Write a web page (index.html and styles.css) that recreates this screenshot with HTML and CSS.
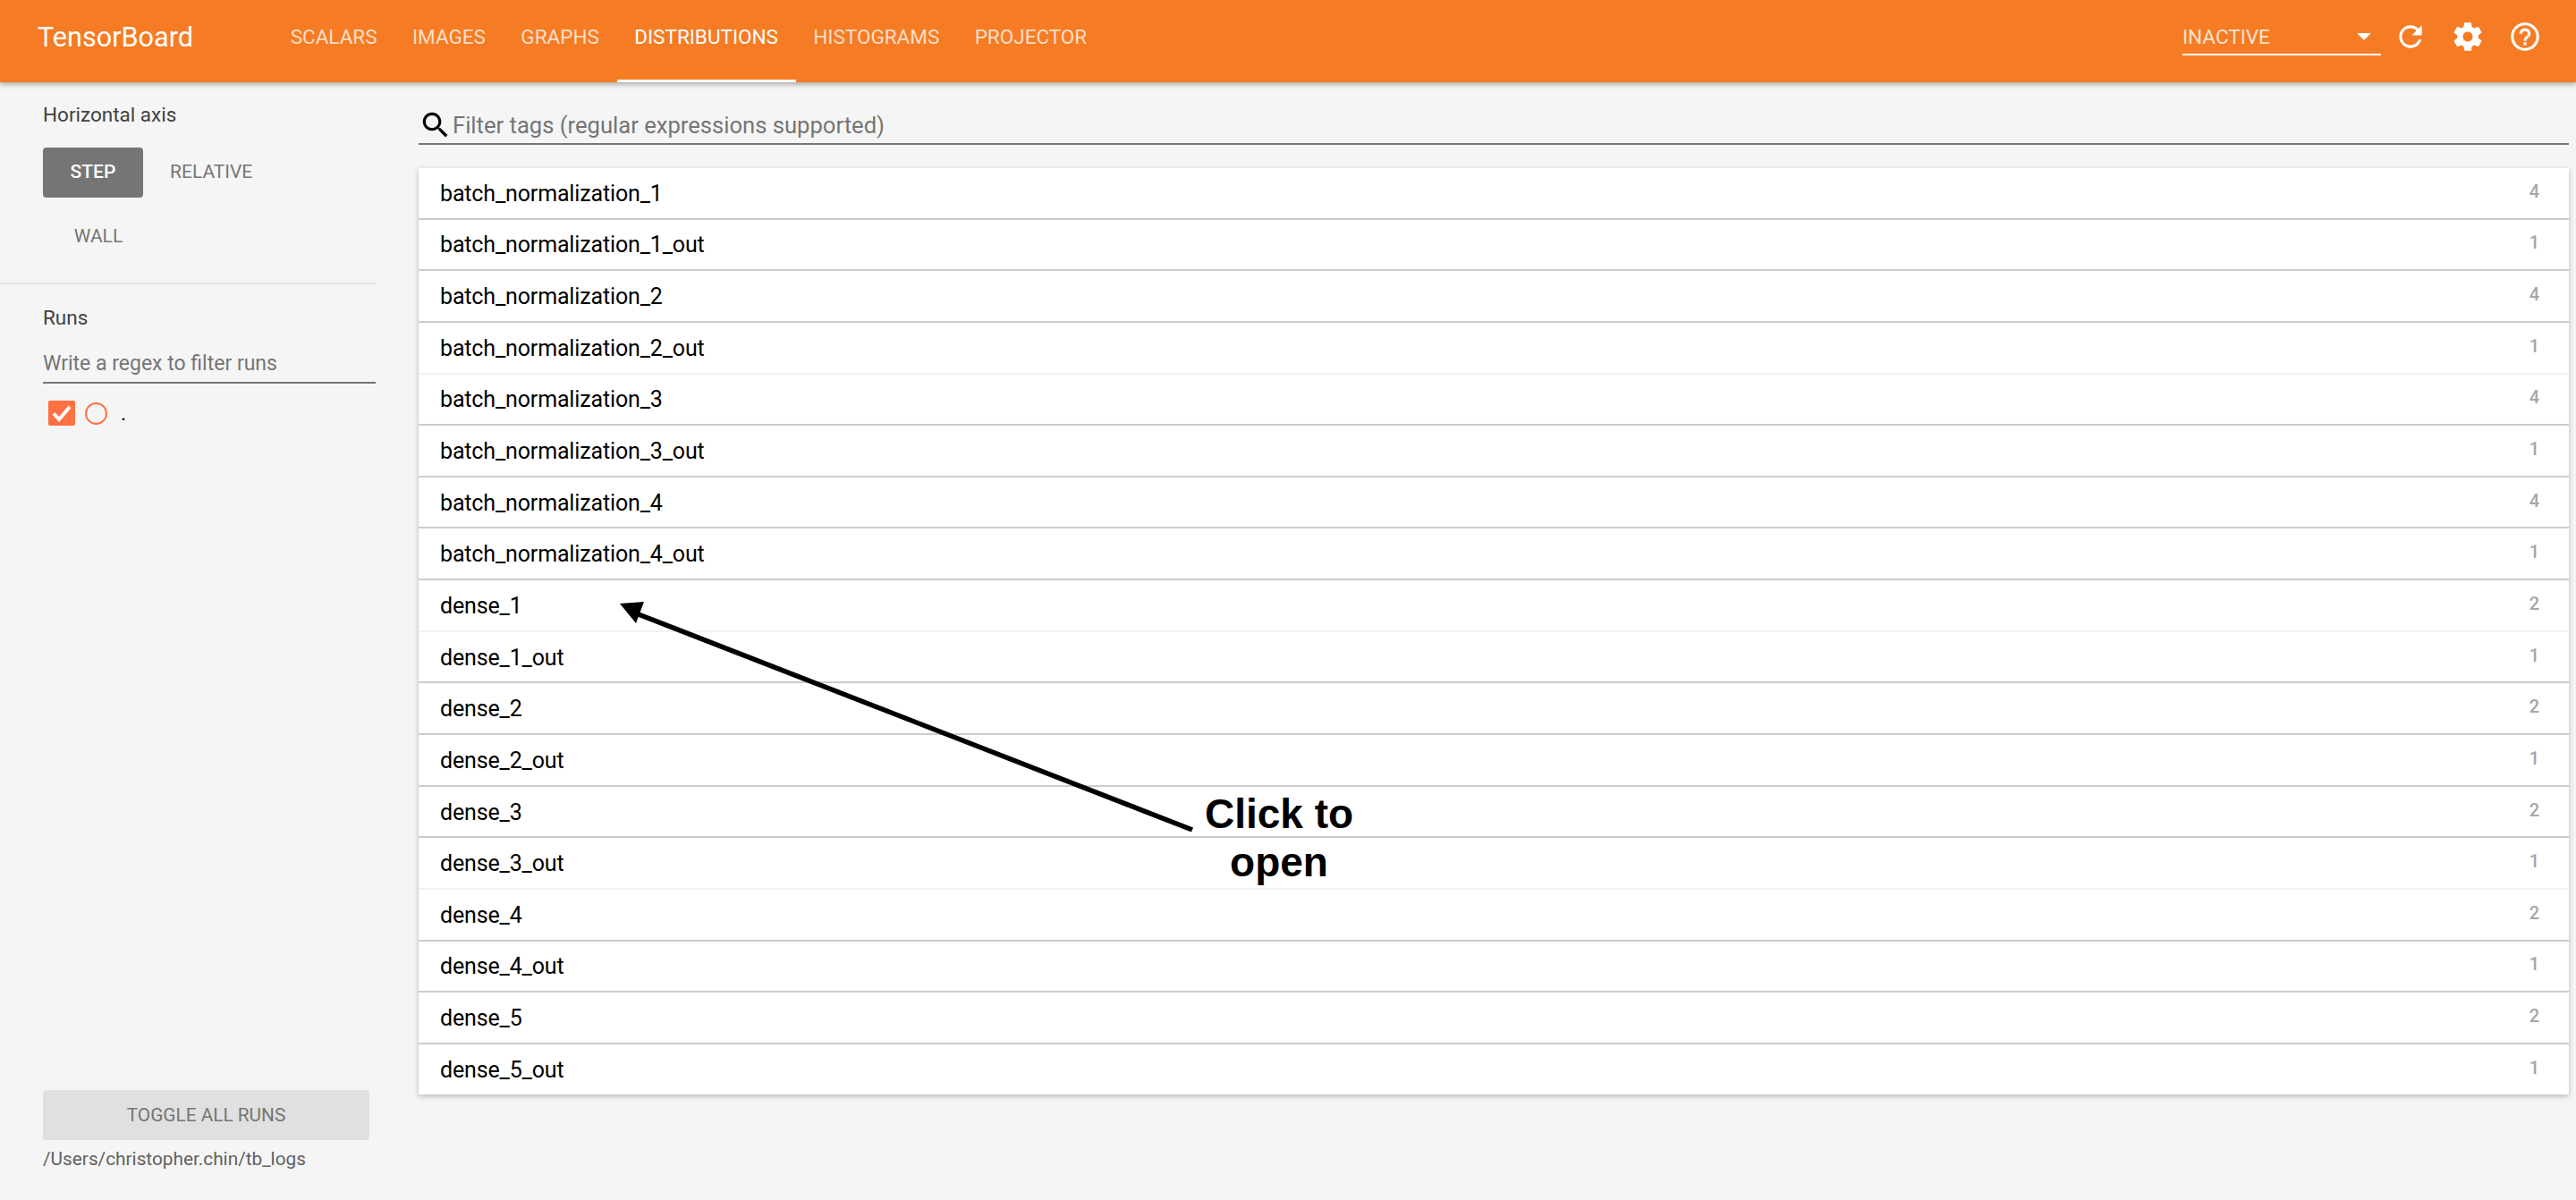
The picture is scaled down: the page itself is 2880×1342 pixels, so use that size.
FILE: index.html
```html
<!DOCTYPE html>
<html lang="en">
<head>
    <meta charset="UTF-8">
    <title>TensorBoard</title>
    <link rel="stylesheet" href="styles.css">
</head>
<body>

    <!-- Top bar -->
    <header class="topbar">
        <div class="brand">TensorBoard</div>
        <nav class="tabs">
            <a class="tab">SCALARS</a>
            <a class="tab">IMAGES</a>
            <a class="tab">GRAPHS</a>
            <a class="tab active">DISTRIBUTIONS</a>
            <a class="tab">HISTOGRAMS</a>
            <a class="tab">PROJECTOR</a>
        </nav>
        <div class="topbar-right">
            <div class="inactive-select">
                <span>INACTIVE</span>
                <span class="caret"></span>
            </div>
            <div class="icon-btn">
                <svg viewBox="0 0 24 24"><path d="M17.65 6.35C16.2 4.9 14.21 4 12 4c-4.42 0-7.99 3.58-7.99 8s3.57 8 7.99 8c3.73 0 6.84-2.55 7.73-6h-2.08c-.82 2.33-3.04 4-5.65 4-3.31 0-6-2.69-6-6s2.69-6 6-6c1.66 0 3.14.69 4.22 1.78L13 11h7V4l-2.35 2.35z"/></svg>
            </div>
            <div class="icon-btn">
                <svg viewBox="0 0 24 24"><path d="M19.43 12.98c.04-.32.07-.64.07-.98s-.03-.66-.07-.98l2.11-1.65c.19-.15.24-.42.12-.64l-2-3.46c-.12-.22-.39-.3-.61-.22l-2.49 1c-.52-.4-1.08-.73-1.69-.98l-.38-2.65C14.46 2.18 14.25 2 14 2h-4c-.25 0-.46.18-.49.42l-.38 2.65c-.61.25-1.17.59-1.69.98l-2.49-1c-.23-.09-.49 0-.61.22l-2 3.46c-.13.22-.07.49.12.64l2.11 1.65c-.04.32-.07.65-.07.98s.03.66.07.98l-2.11 1.65c-.19.15-.24.42-.12.64l2 3.46c.12.22.39.3.61.22l2.49-1c.52.4 1.08.73 1.69.98l.38 2.65c.03.24.24.42.49.42h4c.25 0 .46-.18.49-.42l.38-2.65c.61-.25 1.17-.59 1.69-.98l2.49 1c.23.09.49 0 .61-.22l2-3.46c.12-.22.07-.49-.12-.64l-2.11-1.65zM12 15.5c-1.93 0-3.5-1.57-3.5-3.5s1.57-3.5 3.5-3.5 3.5 1.57 3.5 3.5-1.57 3.5-3.5 3.5z"/></svg>
            </div>
            <div class="icon-btn">
                <svg viewBox="0 0 24 24"><path d="M11 18h2v-2h-2v2zm1-16C6.48 2 2 6.48 2 12s4.48 10 10 10 10-4.48 10-10S17.52 2 12 2zm0 18c-4.41 0-8-3.59-8-8s3.59-8 8-8 8 3.59 8 8-3.59 8-8 8zm0-14c-2.21 0-4 1.79-4 4h2c0-1.1.9-2 2-2s2 .9 2 2c0 2-3 1.75-3 5h2c0-2.25 3-2.5 3-5 0-2.21-1.79-4-4-4z"/></svg>
            </div>
        </div>
    </header>

    <div class="page">

        <!-- Sidebar -->
        <aside class="sidebar">
            <section class="axis-section">
                <div class="side-title">Horizontal axis</div>
                <div class="axis-buttons">
                    <div class="axis-btn selected">STEP</div>
                    <div class="axis-btn">RELATIVE</div>
                    <div class="axis-btn">WALL</div>
                </div>
            </section>
            <section class="runs-section">
                <div class="side-title">Runs</div>
                <div class="runs-filter">Write a regex to filter runs</div>
                <div class="run-row">
                    <span class="run-check">
                        <svg viewBox="0 0 30 28"><path d="M6 14.5l6 6.5L24 7" fill="none" stroke="#fff" stroke-width="4"/></svg>
                    </span>
                    <span class="run-dot"></span>
                    <span class="run-name">.</span>
                </div>
            </section>
            <section class="side-bottom">
                <div class="toggle-btn">TOGGLE ALL RUNS</div>
                <div class="logdir">/Users/christopher.chin/tb_logs</div>
            </section>
        </aside>

        <!-- Tags -->
        <main class="main">
            <div class="tag-filter">
                <svg class="search-icon" viewBox="0 0 24 24"><path d="M15.5 14h-.79l-.28-.27C15.41 12.59 16 11.11 16 9.5 16 5.91 13.09 3 9.5 3S3 5.91 3 9.5 5.91 16 9.5 16c1.61 0 3.09-.59 4.23-1.57l.27.28v.79l5 4.99L20.49 19l-4.99-5zm-6 0C7.01 14 5 11.99 5 9.5S7.01 5 9.5 5 14 7.01 14 9.5 11.99 14 9.5 14z"/></svg>
                <span>Filter tags (regular expressions supported)</span>
            </div>
            <div class="tag-list">
                <div class="tag-row"><span>batch_normalization_1</span><span class="tag-count">4</span></div>
                <div class="tag-row"><span>batch_normalization_1_out</span><span class="tag-count">1</span></div>
                <div class="tag-row"><span>batch_normalization_2</span><span class="tag-count">4</span></div>
                <div class="tag-row"><span>batch_normalization_2_out</span><span class="tag-count">1</span></div>
                <div class="tag-row"><span>batch_normalization_3</span><span class="tag-count">4</span></div>
                <div class="tag-row"><span>batch_normalization_3_out</span><span class="tag-count">1</span></div>
                <div class="tag-row"><span>batch_normalization_4</span><span class="tag-count">4</span></div>
                <div class="tag-row"><span>batch_normalization_4_out</span><span class="tag-count">1</span></div>
                <div class="tag-row"><span>dense_1</span><span class="tag-count">2</span></div>
                <div class="tag-row"><span>dense_1_out</span><span class="tag-count">1</span></div>
                <div class="tag-row"><span>dense_2</span><span class="tag-count">2</span></div>
                <div class="tag-row"><span>dense_2_out</span><span class="tag-count">1</span></div>
                <div class="tag-row"><span>dense_3</span><span class="tag-count">2</span></div>
                <div class="tag-row"><span>dense_3_out</span><span class="tag-count">1</span></div>
                <div class="tag-row"><span>dense_4</span><span class="tag-count">2</span></div>
                <div class="tag-row"><span>dense_4_out</span><span class="tag-count">1</span></div>
                <div class="tag-row"><span>dense_5</span><span class="tag-count">2</span></div>
                <div class="tag-row"><span>dense_5_out</span><span class="tag-count">1</span></div>
            </div>
        </main>
    </div>

    <!-- Annotation drawn over the list -->
    <svg class="note-arrow" viewBox="0 0 660 270">
        <line x1="653" y1="268" x2="26" y2="24" stroke="#000" stroke-width="5.5"/>
        <polygon points="13,15 40,13 31,37" fill="#000"/>
    </svg>
    <div class="note-text">Click to<br>open</div>

</body>
</html>
```

FILE: styles.css
```css
/* Basic Reset */
* {
    margin: 0;
    padding: 0;
    box-sizing: border-box;
}

html, body {
    height: 100%;
    overflow: hidden;
}

body {
    font-family: 'Roboto', sans-serif;
    background: #f5f5f5;
    color: #212121;
    display: flex;
    flex-direction: column;
}

/* Top bar */
.topbar {
    flex: none;
    height: 92px;
    background: #f57c24;
    color: #fff;
    display: flex;
    align-items: stretch;
    box-shadow: 0 2px 6px rgba(0, 0, 0, 0.35);
    position: relative;
    z-index: 2;
}

.brand {
    width: 305px;
    padding-left: 42px;
    font-size: 30.6px;
    line-height: 84px;
}

.tabs {
    display: flex;
}

.tab {
    padding: 0 19.7px;
    font-size: 22.5px;
    line-height: 83px;
    color: rgba(255, 255, 255, 0.75);
    border-bottom: 2px solid transparent;
}

.tab.active {
    color: #fff;
    border-bottom: 3px solid #fff;
}

.topbar-right {
    margin-left: auto;
    padding-right: 25px;
    display: flex;
    align-items: flex-start;
}

.inactive-select {
    width: 222px;
    height: 62px;
    margin-right: 1px;
    border-bottom: 2px solid #fff;
    display: flex;
    align-items: center;
    justify-content: space-between;
    padding: 21px 11px 0 0;
    font-size: 22.5px;
    color: rgba(255, 255, 255, 0.8);
}

.caret {
    width: 0;
    height: 0;
    border-left: 8px solid transparent;
    border-right: 8px solid transparent;
    border-top: 8px solid #fff;
}

.icon-btn {
    width: 64px;
    height: 82px;
    display: flex;
    align-items: center;
    justify-content: center;
}

.icon-btn svg {
    width: 38px;
    height: 38px;
    fill: #fff;
}

/* Page */
.page {
    flex: 1;
    display: flex;
    min-height: 0;
}

/* Sidebar */
.sidebar {
    flex: none;
    width: 468px;
    padding-right: 48px;
    display: flex;
    flex-direction: column;
}

.side-title {
    font-size: 22.5px;
    color: #424242;
}

.axis-section {
    padding: 23px 0 0 48px;
    height: 226px;
    border-bottom: 2px solid #e3e3e3;
}

.axis-buttons {
    display: flex;
    flex-wrap: wrap;
    margin-top: 24px;
}

.axis-btn {
    height: 56px;
    min-width: 124px;
    line-height: 55px;
    padding: 0 30px;
    text-align: center;
    font-size: 21px;
    color: #757575;
    border-radius: 4px;
    margin-bottom: 16px;
}

.axis-btn.selected {
    width: 112px;
    min-width: 0;
    padding: 0;
    background: #757575;
    color: #fff;
    font-weight: 500;
}

.runs-section {
    padding: 24px 0 0 48px;
}

.runs-filter {
    margin-top: 24px;
    height: 37px;
    font-size: 23px;
    line-height: 30px;
    color: #757575;
    border-bottom: 2px solid #757575;
}

.run-row {
    display: flex;
    align-items: center;
    margin-top: 19px;
    padding-left: 6px;
}

.run-check {
    width: 30px;
    height: 28px;
    background: #ff7043;
    border-radius: 2px;
    display: flex;
}

.run-check svg {
    width: 30px;
    height: 28px;
}

.run-dot {
    width: 25px;
    height: 25px;
    margin-left: 11px;
    border: 2px solid #ff7043;
    border-radius: 50%;
}

.run-name {
    margin-left: 15px;
    font-size: 23px;
    color: #000;
}

.side-bottom {
    margin-top: auto;
    padding: 0 0 34px 48px;
}

.toggle-btn {
    width: 365px;
    height: 56px;
    line-height: 56px;
    text-align: center;
    font-size: 20.8px;
    background: #e0e0e0;
    color: #757575;
    border-radius: 4px;
}

.logdir {
    margin-top: 9px;
    font-size: 20.8px;
    color: #616161;
}

/* Tags */
.main {
    flex: 1;
    min-width: 0;
    padding-right: 8px;
}

.tag-filter {
    height: 70px;
    padding-top: 27px;
    display: flex;
    align-items: center;
    border-bottom: 2px solid #757575;
    font-size: 25.6px;
    color: #757575;
}

.search-icon {
    width: 38px;
    height: 38px;
    flex: none;
    fill: #000;
}

.tag-list {
    margin-top: 26px;
    background: #fff;
    box-shadow: 0 2px 6px rgba(0, 0, 0, 0.25);
}

.tag-row {
    height: 57.65px;
    padding: 1px 24px 0;
    display: flex;
    align-items: center;
    justify-content: space-between;
    font-size: 25px;
    letter-spacing: -0.15px;
    color: #000;
    border-bottom: 2px solid #ccc;
}

.tag-row:nth-child(5n+4) {
    border-bottom-color: #f2f2f2;
}

.tag-row:last-child {
    height: 56px;
    border-bottom: none;
}

.tag-count {
    font-size: 20px;
    font-weight: 500;
    color: #a6a6a6;
    margin: 0 9px 5px 0;
}

/* Annotation */
.note-arrow {
    position: absolute;
    left: 680px;
    top: 660px;
    width: 660px;
    height: 270px;
}

.note-text {
    position: absolute;
    left: 1330px;
    top: 883px;
    width: 200px;
    text-align: center;
    font-family: 'Liberation Sans', sans-serif;
    font-weight: bold;
    font-size: 46px;
    line-height: 54px;
    color: #000;
}
```
